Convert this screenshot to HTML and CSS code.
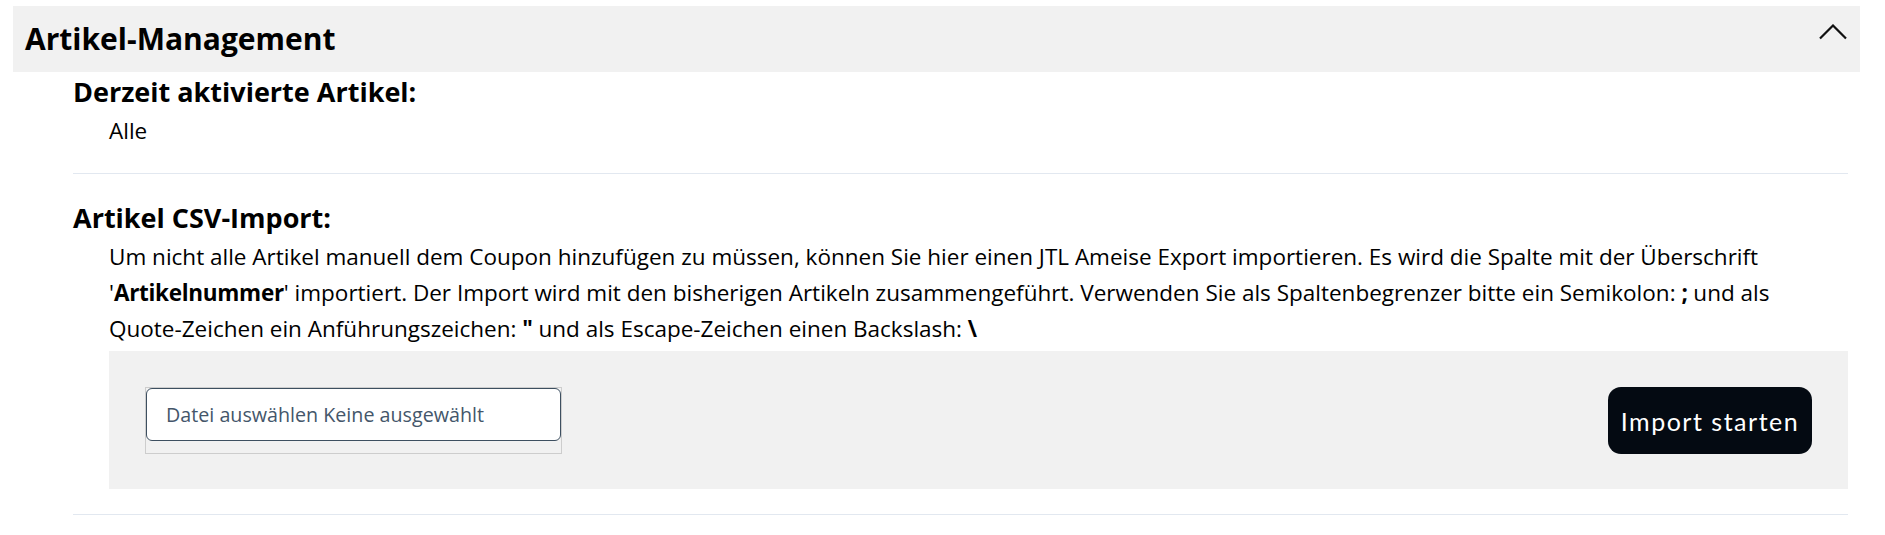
FILE: index.html
```html
<!DOCTYPE html>
<html lang="de">
<head>
<meta charset="utf-8">
<title>Artikel-Management</title>
<link rel="stylesheet" href="styles.css">
</head>
<body>
<div class="page">
  <div class="panel">
    <div class="panel-header">
      <h2 class="panel-title">Artikel-Management</h2>
      <svg class="chevron" width="28" height="16" viewBox="0 0 28 16" aria-hidden="true">
        <polyline points="1,14.5 14,1.5 27,14.5" fill="none" stroke="#111" stroke-width="2.2"/>
      </svg>
    </div>
    <div class="panel-body">
      <section class="field">
        <h3 class="field-label">Derzeit aktivierte Artikel:</h3>
        <div class="field-content">Alle</div>
      </section>
      <section class="field">
        <h3 class="field-label">Artikel CSV-Import:</h3>
        <div class="field-content">
          <p class="hint">Um nicht alle Artikel manuell dem Coupon hinzufügen zu müssen, können Sie hier einen JTL Ameise Export importieren. Es wird die Spalte mit der Überschrift '<b>Artikelnummer</b>' importiert. Der Import wird mit den bisherigen Artikeln zusammengeführt. Verwenden Sie als Spaltenbegrenzer bitte ein Semikolon: <b>;</b> und als <span class="nowrap">Quote-Zeichen</span> ein Anführungszeichen: <b>"</b> und als <span class="nowrap">Escape-Zeichen</span> einen Backslash: <b>\</b></p>
          <div class="import-box">
            <div class="file-field">
              <label class="file-input">Datei auswählen Keine ausgewählt</label>
            </div>
            <button class="btn-import" type="button">Import starten</button>
          </div>
        </div>
      </section>
    </div>
  </div>
</div>
</body>
</html>
```
FILE: styles.css
```css
* { box-sizing: border-box; }
html, body { margin: 0; padding: 0; background: #fff; }
body {
  font-family: "Open Sans", "Noto Sans", sans-serif;
  color: #000;
}
.page {
  padding: 6px 25px 0 13px;
}
.panel-header {
  height: 66px;
  background: #f1f1f1;
  display: flex;
  align-items: center;
  justify-content: space-between;
  padding: 0 13px 0 12px;
}
.panel-title {
  margin: 0;
  font-size: 30px;
  font-weight: 700;
  line-height: 40px;
}
.chevron { display: block; margin-bottom: 14px; }
.panel-body {
  padding: 0 12px 0 60px;
}
.field {
  padding: 26px 0 24px;
  border-bottom: 1px solid #e2e8f0;
}
.field:first-child { padding-top: 2px; }
.field-label {
  margin: 0 0 3px;
  font-size: 27px;
  font-weight: 700;
  line-height: 36px;
}
.field-content {
  padding-left: 36px;
  font-size: 22.5px;
  line-height: 36px;
}
.nowrap { white-space: nowrap; }
.hint { margin: 0 0 4px; }
.hint b { font-weight: 700; letter-spacing: -0.3px; }
.import-box {
  background: #f1f1f1;
  display: flex;
  justify-content: space-between;
  align-items: flex-start;
  padding: 36px 36px 35px 36px;
  margin-bottom: 1px;
}
.file-field {
  width: 417px;
  height: 67px;
  border: 1px solid #cdcdcd;
}
.file-input {
  display: block;
  height: 53px;
  background: #fff;
  border: 1px solid #3d4f60;
  border-radius: 6px;
  padding-left: 19px;
  font-size: 19.7px;
  line-height: 51px;
  color: #44566a;
}
.btn-import {
  width: 204px;
  height: 67px;
  border: 0;
  border-radius: 13px;
  background: #040a12;
  color: #fff;
  font-family: "Lato", "Open Sans", sans-serif;
  font-size: 25px;
  letter-spacing: 1.5px;
  padding: 0;
}
```
